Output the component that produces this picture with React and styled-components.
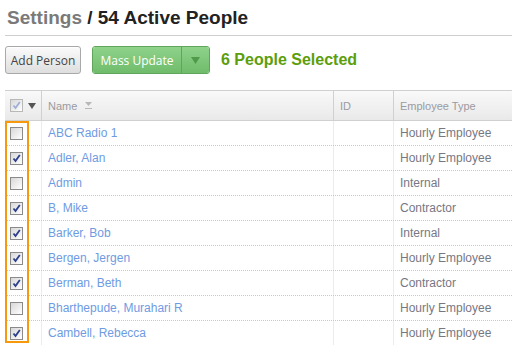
import React from "react";
import styled, { createGlobalStyle } from "styled-components";

const GlobalStyle = createGlobalStyle`
  html, body {
    margin: 0;
    padding: 0;
    background: #fff;
    font-family: "Liberation Sans", Arial, sans-serif;
  }
`;

const Page = styled.div`
  width: 512px;
  height: 345px;
  overflow: hidden;
  padding-left: 5px;
  box-sizing: border-box;
`;

const TitleBar = styled.div`
  height: 36px;
  border-bottom: 1px solid #cfcfcf;
  box-sizing: border-box;
  display: flex;
  align-items: center;
  padding-left: 2px;
`;

const Title = styled.h1`
  margin: 0;
  font-size: 19px;
  font-weight: bold;
  color: #222;
  font-family: "Liberation Sans", Arial, sans-serif;
  span {
    color: #7a7a7a;
  }
`;

const Toolbar = styled.div`
  display: flex;
  align-items: center;
  margin-top: 10px;
  height: 28px;
`;

const Button = styled.button`
  height: 28px;
  width: 76px;
  box-sizing: border-box;
  padding: 0;
  font-family: "Open Sans", sans-serif;
  font-size: 12px;
  border-radius: 3px;
  cursor: pointer;
  color: #444;
  background: linear-gradient(#fbfbfb, #dedede);
  border: 1px solid #a9a9a9;
  box-shadow: inset 0 1px 0 #fff;
`;

const Split = styled.div`
  display: flex;
  margin-left: 11px;
  height: 28px;
  border: 1px solid #5fa65b;
  border-radius: 3px;
  overflow: hidden;
  box-sizing: border-box;
`;

const GreenPart = styled.div`
  display: flex;
  align-items: center;
  justify-content: center;
  font-family: "Open Sans", sans-serif;
  font-size: 12px;
  color: #fff;
  background: linear-gradient(#8fd28b, #6fbc6b);
  width: ${(p) => (p.$arrow ? "28px" : "88px")};
  border-left: ${(p) => (p.$arrow ? "1px solid #5fa65b" : "none")};
  box-sizing: border-box;
`;

const Selected = styled.div`
  margin-left: 11px;
  font-size: 16px;
  font-weight: bold;
  color: #5c9e0c;
`;

const TableWrap = styled.div`
  position: relative;
  margin-top: 16px;
`;

const Row = styled.div`
  display: grid;
  grid-template-columns: 36px 292px 60px 1fr;
  height: ${(p) => (p.$head ? "31px" : "25px")};
  box-sizing: border-box;
  border-bottom: ${(p) => (p.$head ? "1px solid #d0d0d0" : "1px dotted #c8c8c8")};
  border-top: ${(p) => (p.$head ? "1px solid #d0d0d0" : "none")};
  background: ${(p) => (p.$head ? "linear-gradient(#f9f9f9, #e9e9e9)" : "#fff")};
`;

const Cell = styled.div`
  display: flex;
  align-items: center;
  padding-left: ${(p) => (p.$box ? "5px" : "6px")};
  border-left: ${(p) => (p.$first ? "none" : p.$head ? "1px solid #d0d0d0" : "1px solid #ececec")};
  font-size: ${(p) => (p.$head ? "11px" : "12px")};
  color: ${(p) => (p.$head ? "#9a9aa2" : "#777784")};
  white-space: nowrap;
  box-sizing: border-box;
`;

const NameLink = styled.a`
  color: #6f9be2;
  text-decoration: none;
`;

const Box = styled.span`
  width: 13px;
  height: 13px;
  box-sizing: border-box;
  border: 1px solid ${(p) => (p.$light ? "#b8b8b8" : "#8a8a8a")};
  background: linear-gradient(135deg, #d8d8d8, #ffffff);
  display: inline-flex;
  align-items: center;
  justify-content: center;
`;

const Caret = styled.svg`
  margin-left: 5px;
`;

const Highlight = styled.div`
  position: absolute;
  left: 0;
  top: 31px;
  width: 24px;
  height: 222px;
  border: 2px solid #f7990c;
  box-sizing: border-box;
  pointer-events: none;
`;

const Check = ({ on, light }) => (
  <Box $light={light}>
    {on && (
      <svg width="9" height="9" viewBox="0 0 9 9">
        <path
          d="M1.5 4.5 L3.5 7 L7.8 1"
          fill="none"
          stroke={light ? "#9fb0d6" : "#2b3f8c"}
          strokeWidth="1.8"
        />
      </svg>
    )}
  </Box>
);

const SortIcon = () => (
  <svg width="9" height="9" viewBox="0 0 9 9" style={{ marginLeft: 7 }}>
    <path d="M1 1 H8 L4.5 5 Z" fill="#b8b8b8" />
    <rect x="1" y="7" width="7" height="1" fill="#b8b8b8" />
  </svg>
);

const people = [
  ["ABC Radio 1", "Hourly Employee", false],
  ["Adler, Alan", "Hourly Employee", true],
  ["Admin", "Internal", false],
  ["B, Mike", "Contractor", true],
  ["Barker, Bob", "Internal", true],
  ["Bergen, Jergen", "Hourly Employee", true],
  ["Berman, Beth", "Contractor", true],
  ["Bharthepude, Murahari R", "Hourly Employee", false],
  ["Cambell, Rebecca", "Hourly Employee", true],
];

const App = () => {
  return (
    <Page>
      <GlobalStyle />
      <TitleBar>
        <Title>
          <span>Settings</span> / 54 Active People
        </Title>
      </TitleBar>
      <Toolbar>
        <Button>Add Person</Button>
        <Split>
          <GreenPart>Mass Update</GreenPart>
          <GreenPart $arrow>
            <svg width="9" height="7" viewBox="0 0 9 7">
              <path d="M0 0 H9 L4.5 7 Z" fill="#4f9a4b" />
            </svg>
          </GreenPart>
        </Split>
        <Selected>6 People Selected</Selected>
      </Toolbar>
      <TableWrap>
        <Row $head>
          <Cell $head $first $box>
            <Check on light />
            <Caret width="8" height="6" viewBox="0 0 8 6">
              <path d="M0 0 H8 L4 6 Z" fill="#555" />
            </Caret>
          </Cell>
          <Cell $head>
            Name
            <SortIcon />
          </Cell>
          <Cell $head>ID</Cell>
          <Cell $head>Employee Type</Cell>
        </Row>
        {people.map(([name, type, on]) => (
          <Row key={name}>
            <Cell $first $box>
              <Check on={on} />
            </Cell>
            <Cell>
              <NameLink href="#">{name}</NameLink>
            </Cell>
            <Cell />
            <Cell>{type}</Cell>
          </Row>
        ))}
        <Highlight />
      </TableWrap>
    </Page>
  );
};

export default App;
